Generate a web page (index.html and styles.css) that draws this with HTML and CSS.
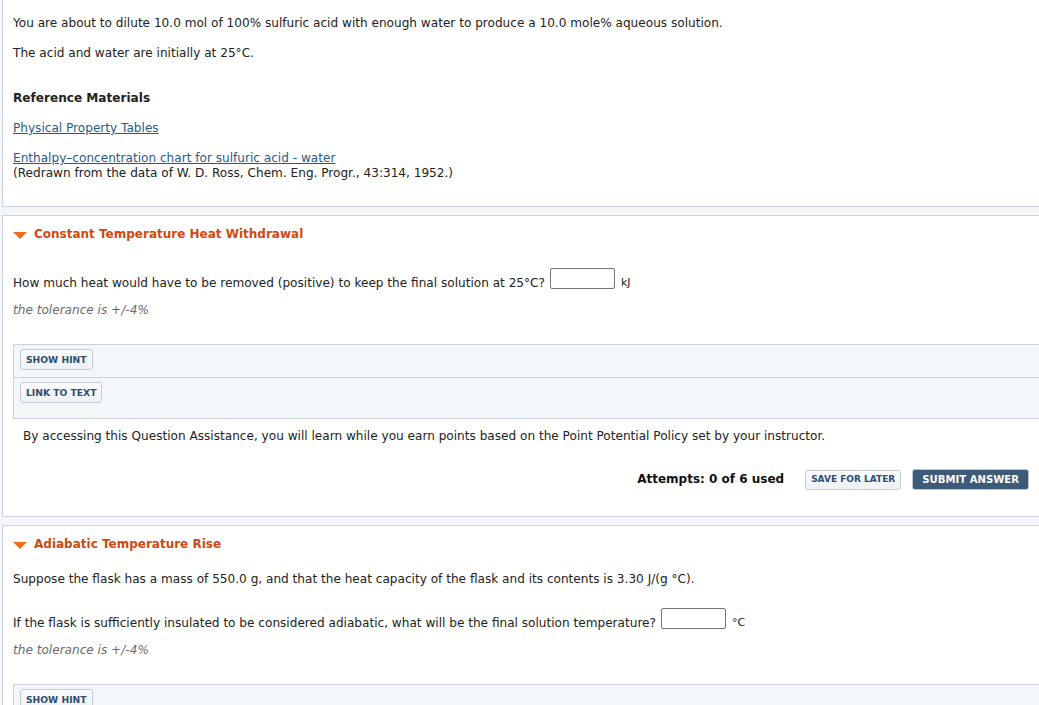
FILE: index.html
```html
<!DOCTYPE html>
<html>
<head>
<meta charset="utf-8">
<link rel="stylesheet" href="styles.css">
</head>
<body>
<div class="page">
  <div class="card card-intro">
    <p class="line">You are about to dilute 10.0 mol of 100% sulfuric acid with enough water to produce a 10.0 mole% aqueous solution.</p>
    <p class="line line-gap">The acid and water are initially at 25°C.</p>
    <p class="line ref-title">Reference Materials</p>
    <p class="line line-gap"><a href="#" class="link">Physical Property Tables</a></p>
    <p class="line line-gap"><a href="#" class="link">Enthalpy–concentration chart for sulfuric acid - water</a><br>(Redrawn from the data of W. D. Ross, Chem. Eng. Progr., 43:314, 1952.)</p>
  </div>

  <div class="card card-part">
    <div class="part-head"><span class="tri"></span><span>Constant Temperature Heat Withdrawal</span></div>
    <div class="q-row q-row-first"><span class="q-text">How much heat would have to be removed (positive) to keep the final solution at 25°C?</span><span class="answer"></span><span class="unit">kJ</span></div>
    <div class="tol">the tolerance is +/-4%</div>
    <div class="assist">
      <div class="assist-row"><span class="btn">SHOW HINT</span></div>
      <div class="assist-row assist-last"><span class="btn">LINK TO TEXT</span></div>
    </div>
    <div class="policy">By accessing this Question Assistance, you will learn while you earn points based on the Point Potential Policy set by your instructor.</div>
    <div class="actions">
      <span class="attempts">Attempts: 0 of 6 used</span>
      <span class="btn btn-save">SAVE FOR LATER</span>
      <span class="btn btn-submit">SUBMIT ANSWER</span>
    </div>
  </div>

  <div class="card card-part card-last">
    <div class="part-head"><span class="tri"></span><span>Adiabatic Temperature Rise</span></div>
    <div class="line given">Suppose the flask has a mass of 550.0 g, and that the heat capacity of the flask and its contents is 3.30 J/(g °C).</div>
    <div class="q-row q-row-second"><span class="q-text">If the flask is sufficiently insulated to be considered adiabatic, what will be the final solution temperature?</span><span class="answer"></span><span class="unit">°C</span></div>
    <div class="tol">the tolerance is +/-4%</div>
    <div class="assist">
      <div class="assist-row"><span class="btn">SHOW HINT</span></div>
      <div class="assist-row assist-last"><span class="btn">LINK TO TEXT</span></div>
    </div>
  </div>
</div>
</body>
</html>
```

FILE: styles.css
```css
html, body {
  margin: 0;
  padding: 0;
  background: #f4f7fa;
  overflow: hidden;
}

body {
  font-family: "DejaVu Sans", Verdana, sans-serif;
  font-size: 12.1px;
  line-height: 15px;
  color: #222;
}

.page {
  padding-left: 2px;
}

.card {
  background: #fff;
  border: 1px solid #cdd3de;
  border-right: 0;
  padding: 0 10px 0 10px;
}

.card-intro {
  border-top: 0;
  padding-top: 16px;
  padding-bottom: 25px;
}

.line {
  margin: 0;
}

.line-gap {
  margin-top: 15px;
}

.ref-title {
  margin-top: 30px;
  font-weight: bold;
}

.link {
  color: #1f5c8b;
  text-decoration: underline;
}

.card-part {
  margin-top: 8px;
  padding-top: 11px;
  padding-bottom: 26px;
}

.card-last {
  padding-bottom: 40px;
}

.part-head {
  display: flex;
  align-items: center;
  gap: 7px;
  font-weight: bold;
  font-size: 12px;
  color: #d2480f;
  height: 15px;
}

.tri {
  width: 0;
  height: 0;
  border-left: 7px solid transparent;
  border-right: 7px solid transparent;
  border-top: 7px solid #f26a1b;
  margin-top: 2px;
}

.q-row {
  display: flex;
  align-items: flex-end;
  height: 21px;
}

.q-text {
  margin-bottom: -2px;
}

.q-row-first {
  margin-top: 26px;
}

.given {
  margin-top: 20px;
}

.q-row-second {
  margin-top: 21px;
}

.answer {
  display: inline-block;
  width: 65px;
  box-sizing: border-box;
  height: 21px;
  border: 1px solid #767676;
  border-radius: 2px;
  background: #fff;
  margin-left: 5px;
}

.unit {
  margin-left: 6px;
  margin-bottom: -1px;
  font-size: 11px;
}

.tol {
  margin-top: 14px;
  font-style: italic;
  color: #6b6b6b;
}

.assist {
  margin-top: 26px;
  margin-right: -10px;
  background: #f4f7fa;
  border: 1px solid #cdd3de;
  border-right: 0;
}

.assist-row {
  padding: 4px 6px 7px;
  display: flex;
}

.assist-row + .assist-row {
  border-top: 1px solid #cdd3de;
}

.assist-last {
  padding-bottom: 15px;
}

.btn {
  display: inline-flex;
  align-items: center;
  height: 19px;
  padding: 0 5px;
  font-size: 9.2px;
  font-weight: bold;
  color: #2d4e73;
  background: linear-gradient(#fbfcfd, #eef1f5);
  border: 1px solid #c6ccd6;
  border-radius: 3px;
}

.policy {
  margin-top: 10px;
  padding-left: 10px;
}

.actions {
  margin-top: 25px;
  display: flex;
  justify-content: flex-end;
  align-items: center;
  height: 21px;
}

.attempts {
  font-weight: bold;
  font-size: 12px;
  color: #111;
  margin-right: 21px;
}

.btn-save {
  height: 18px;
  padding: 0 5px;
  font-size: 9px;
}

.btn-submit {
  margin-left: 11px;
  height: 19px;
  padding: 0 9px;
  color: #fff;
  background: #3d5a78;
  border: 1px solid #b8c4d2;
  font-size: 10.1px;
}
```
